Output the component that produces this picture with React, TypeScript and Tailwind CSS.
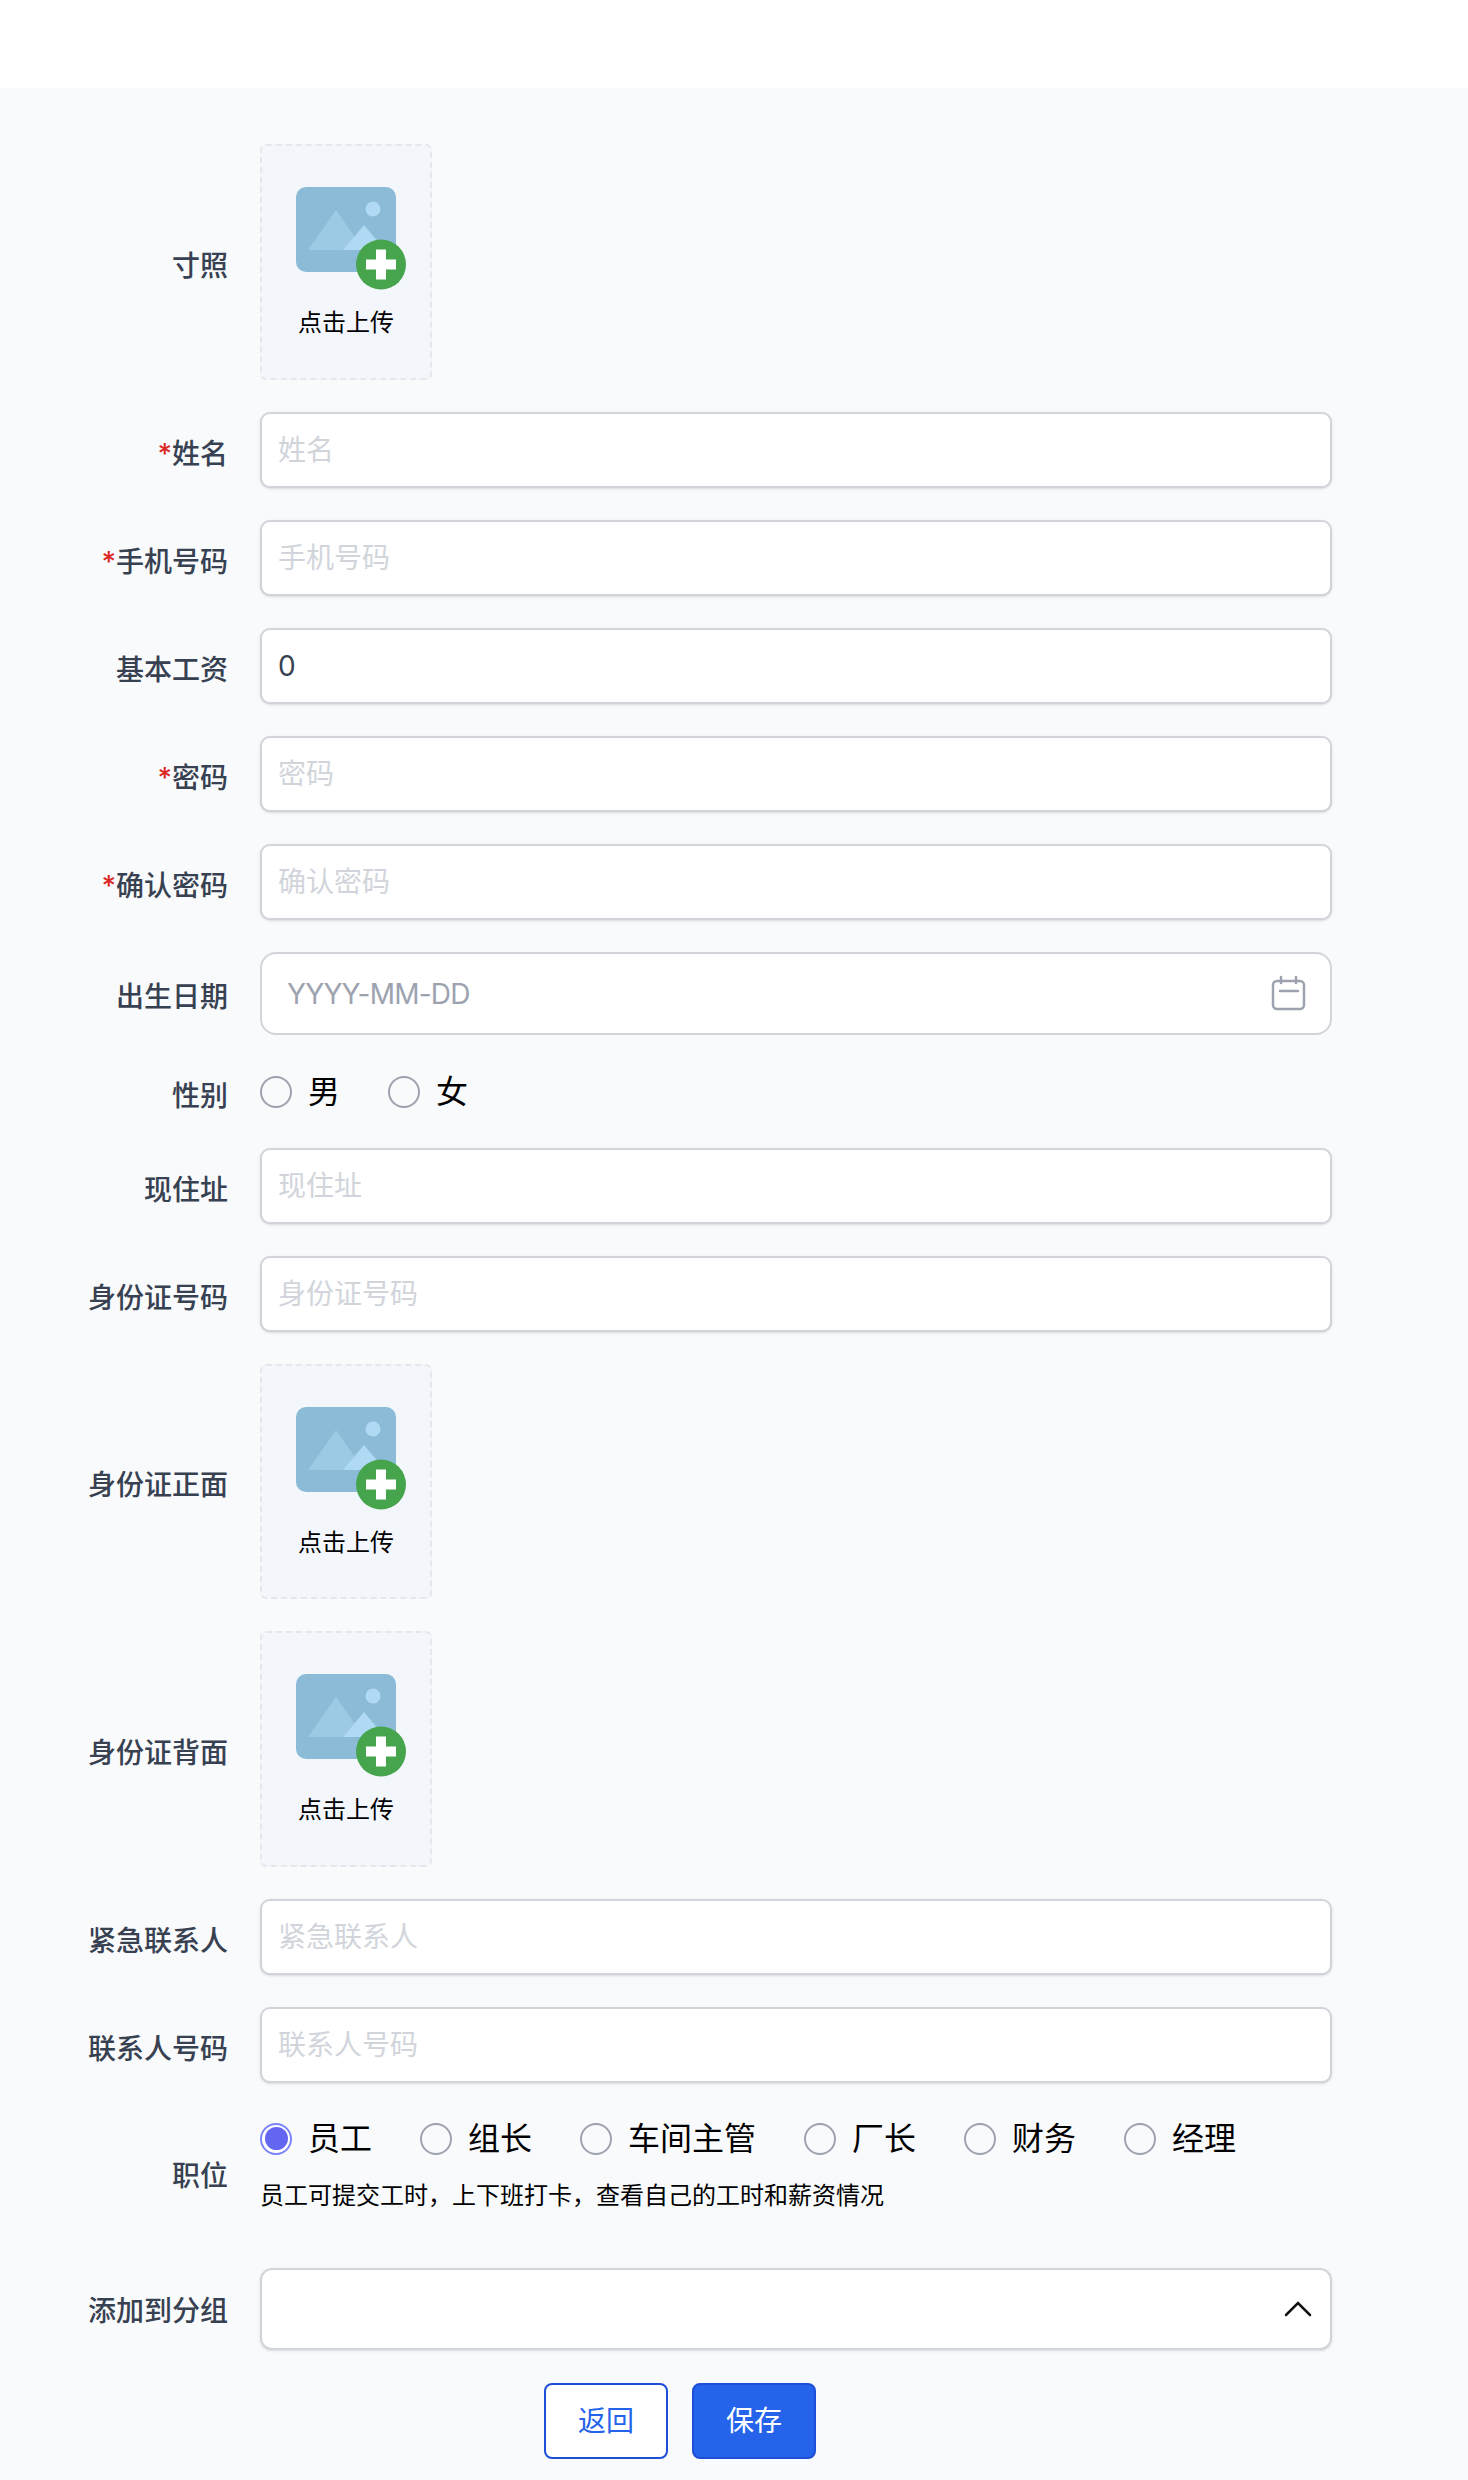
import React from 'react';

const FONT = "font-[Inter,'Noto_Sans_CJK_SC',sans-serif]";

function UploadIcon() {
    return (
        <svg width="110" height="104" viewBox="0 0 110 104" className="block">
            <rect x="0" y="0" width="100" height="85" rx="10" fill="#8bbbd6" />
            <path d="M12 63 L40 23 L68 63 Z" fill="#9ccae3" />
            <path d="M47 63 L68 38 L89 63 Z" fill="#b0daf3" />
            <circle cx="77" cy="22" r="7.5" fill="#b0daf3" />
            <circle cx="85" cy="77.5" r="25" fill="#46a44d" />
            <path d="M80 62.5 H90 V72.5 H100 V82.5 H90 V92.5 H80 V82.5 H70 V72.5 H80 Z" fill="#fff" />
        </svg>
    );
}

function CalendarIcon() {
    return (
        <svg width="36" height="36" viewBox="0 0 36 36" fill="none" stroke="#9ca3af" strokeWidth="2.5" strokeLinecap="round">
            <rect x="3" y="6" width="31" height="28" rx="4" />
            <path d="M11 2 V8 M26 2 V8 M10 16 H28" />
        </svg>
    );
}

function ChevronUp() {
    return (
        <svg width="28" height="16" viewBox="0 0 28 16" fill="none" stroke="#111" strokeWidth="2.5" strokeLinecap="round">
            <path d="M2 14 L14 2 L26 14" />
        </svg>
    );
}

function Row({ label, required, labelPad = 'pt-2', children }: { label: string; required?: boolean; labelPad?: string; children: React.ReactNode }) {
    return (
        <div className="flex items-center">
            <label className={`w-[228px] shrink-0 text-right text-[28px] leading-[40px] font-medium text-[#374151] ${labelPad}`}>
                {required && <span className="text-[#dc2626]">*</span>}
                {label}
            </label>
            <div className="ml-[32px] w-[1072px]">{children}</div>
        </div>
    );
}

function TextField({ placeholder, value }: { placeholder?: string; value?: string }) {
    return (
        <input
            readOnly
            placeholder={placeholder}
            value={value ?? ''}
            className="block h-[76px] w-full rounded-[10px] border-2 border-[#d1d5db] bg-white px-[16px] pt-[1px] text-[28px] text-[#374151] shadow-sm outline-none placeholder:text-[#d1d5db]"
        />
    );
}

function Upload() {
    return (
        <div className="flex h-[235.5px] w-[172px] flex-col items-center rounded-[6px] border-2 border-dashed border-[#e5e7eb] bg-[#f3f6fb] pt-[41px]">
            <div className="ml-[10px]">
                <UploadIcon />
            </div>
            <span className="mt-[15px] text-[24px] leading-[34px] text-black">点击上传</span>
        </div>
    );
}

function Radio({ label, checked }: { label: string; checked?: boolean }) {
    return (
        <div className="flex items-center">
            {checked ? (
                <span className="flex h-[32px] w-[32px] items-center justify-center rounded-full border-2 border-[#7b83fb] bg-white">
                    <span className="h-[23px] w-[23px] rounded-full bg-[#6366f1]" />
                </span>
            ) : (
                <span className="h-[32px] w-[32px] rounded-full border-2 border-[#9ca3af] bg-transparent" />
            )}
            <span className="ml-[16px] text-[32px] leading-[48px] text-black">{label}</span>
        </div>
    );
}

const ROLES = ['员工', '组长', '车间主管', '厂长', '财务', '经理'];

export default function App() {
    return (
        <div className={`min-h-[2480px] bg-[#f9fafb] ${FONT}`}>
            {/* Header */}
            <div className="h-[88px] bg-white" />

            <div className="flex flex-col gap-[32px] pt-[56px]">
                <Row label="寸照">
                    <Upload />
                </Row>
                <Row label="姓名" required>
                    <TextField placeholder="姓名" />
                </Row>
                <Row label="手机号码" required>
                    <TextField placeholder="手机号码" />
                </Row>
                <Row label="基本工资">
                    <TextField value="0" />
                </Row>
                <Row label="密码" required>
                    <TextField placeholder="密码" />
                </Row>
                <Row label="确认密码" required>
                    <TextField placeholder="确认密码" />
                </Row>
                <Row label="出生日期">
                    <div className="flex h-[83px] items-center justify-between rounded-[16px] border-2 border-[#d1d5db] bg-white pr-[24px] pl-[25px]">
                        <span className="pt-[2px] text-[28px] tracking-[-0.8px] text-[#9ca3af]">YYYY-MM-DD</span>
                        <CalendarIcon />
                    </div>
                </Row>
                <Row label="性别" labelPad="pt-[9px]">
                    <div className="flex h-[49px] items-end gap-[48px]">
                        <Radio label="男" />
                        <Radio label="女" />
                    </div>
                </Row>
                <Row label="现住址">
                    <TextField placeholder="现住址" />
                </Row>
                <Row label="身份证号码">
                    <TextField placeholder="身份证号码" />
                </Row>
                <Row label="身份证正面">
                    <Upload />
                </Row>
                <Row label="身份证背面">
                    <Upload />
                </Row>
                <Row label="紧急联系人">
                    <TextField placeholder="紧急联系人" />
                </Row>
                <Row label="联系人号码">
                    <TextField placeholder="联系人号码" />
                </Row>
                <Row label="职位" labelPad="pt-[2px]">
                    <div className="h-[121px]">
                        <div className="flex gap-[48px]">
                            {ROLES.map((r, i) => (
                                <Radio key={r} label={r} checked={i === 0} />
                            ))}
                        </div>
                        <p className="mt-[15px] text-[24px] leading-[36px] text-black">员工可提交工时，上下班打卡，查看自己的工时和薪资情况</p>
                    </div>
                </Row>
                <Row label="添加到分组" labelPad="pt-[4px]">
                    <div className="flex h-[82px] items-center justify-end rounded-[12px] border-2 border-[#d1d5db] bg-white pr-[18px] shadow-sm">
                        <ChevronUp />
                    </div>
                </Row>
            </div>

            {/* Buttons */}
            <div className="mt-[33px] flex w-[1360px] justify-center gap-[24px]">
                <button className="h-[76px] w-[124px] rounded-[8px] border-2 border-[#1d4ed8] bg-white text-[28px] text-[#2563eb]">返回</button>
                <button className="h-[76px] w-[124px] rounded-[8px] border-2 border-[#1d4ed8] bg-[#2563eb] text-[28px] text-white">保存</button>
            </div>
        </div>
    );
}
